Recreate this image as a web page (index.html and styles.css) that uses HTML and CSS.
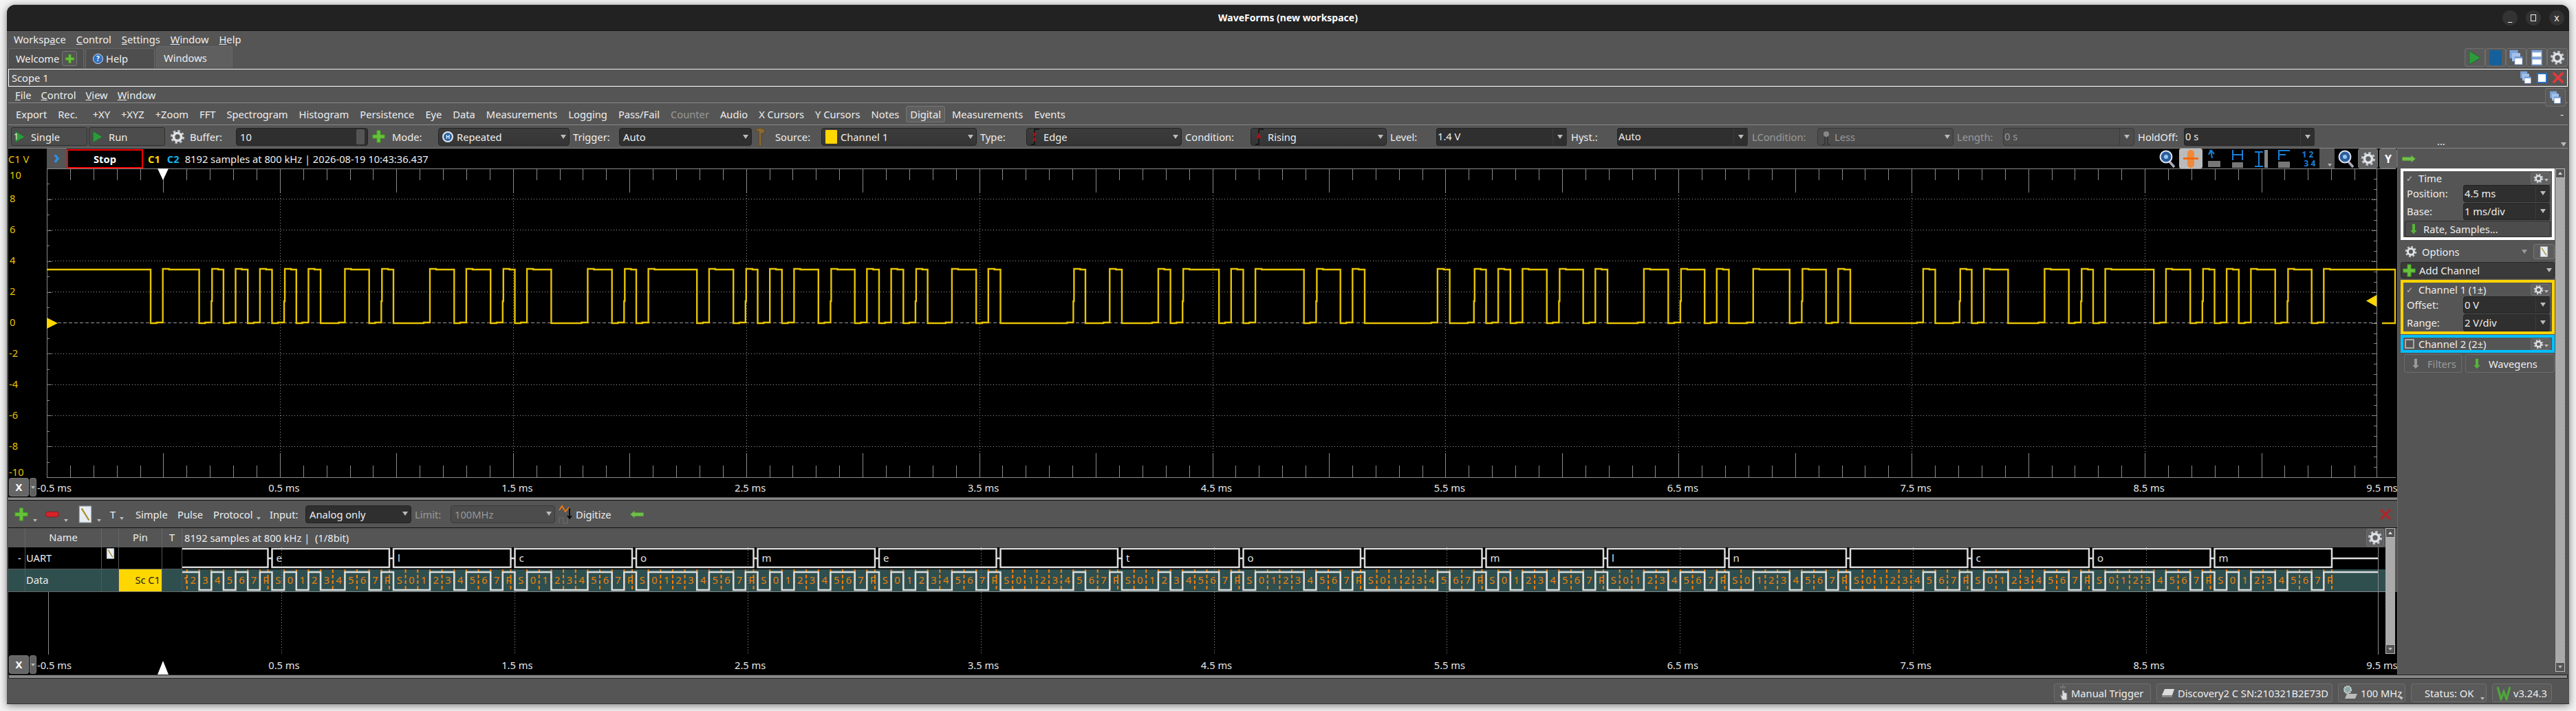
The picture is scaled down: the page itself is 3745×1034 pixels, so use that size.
FILE: index.html
```html
<!DOCTYPE html>
<html lang="en">
<head>
    <meta charset="UTF-8">
    <title>WaveForms (new workspace)</title>
    <link rel="stylesheet" href="styles.css">
</head>
<body>
    <svg class="defs" width="0" height="0">
        <symbol id="i-gear" viewBox="0 0 24 24">
            <circle cx="12" cy="12" r="9" fill="none" stroke="#c4c8cc" stroke-width="4" stroke-dasharray="3.6 3.47"/>
            <circle cx="12" cy="12" r="6" fill="none" stroke="#dfe2e6" stroke-width="4"/>
        </symbol>
        <symbol id="i-plus" viewBox="0 0 24 24">
            <path d="M9 2h6v7h7v6h-7v7H9v-7H2V9h7z" fill="#66c23a" stroke="#3f8d22"/>
        </symbol>
        <symbol id="i-minus" viewBox="0 0 24 24">
            <rect x="2" y="8" width="20" height="8" rx="3" fill="#d8232a" stroke="#8c1a1e"/>
        </symbol>
        <symbol id="i-play" viewBox="0 0 24 24">
            <path d="M3 1l18 11L3 23z" fill="#2d9a3c" stroke="#1c6a28"/>
        </symbol>
        <symbol id="i-down" viewBox="0 0 24 24">
            <path d="M9 1h6v14h4l-7 8-7-8h4z" fill="currentColor"/>
        </symbol>
        <symbol id="i-left" viewBox="0 0 24 16">
            <path d="M1 8l7-6v3h15v6H8v3z" fill="#6fbf4a" stroke="#4c8f30" stroke-width=".6"/>
        </symbol>
        <symbol id="i-right" viewBox="0 0 24 16">
            <path d="M23 8l-7-6v3H1v6h15v3z" fill="#6fbf4a" stroke="#4c8f30" stroke-width=".6"/>
        </symbol>
        <symbol id="i-mag" viewBox="0 0 24 28">
            <path d="M15 18l7 8" stroke="#aab" stroke-width="3.5"/>
            <circle cx="10" cy="11" r="8.5" fill="#2a5e9e" stroke="#dfe6f0" stroke-width="2"/>
            <circle cx="10" cy="11" r="3" fill="#9cc4ee"/>
        </symbol>
        <symbol id="i-note" viewBox="0 0 18 24">
            <rect x="1" y="1" width="16" height="22" fill="#e8edf5" stroke="#9aa"/>
            <path d="M4 4l10 16" stroke="#a88f2c" stroke-width="2"/>
        </symbol>
        <symbol id="i-win" viewBox="0 0 24 28">
            <rect x="1" y="1" width="14" height="14" fill="#7ea4d8"/>
            <rect x="5" y="6" width="14" height="14" fill="#a4c2ea"/>
            <rect x="9" y="12" width="14" height="14" fill="#6f97d0"/>
            <rect x="10" y="15" width="12" height="10" fill="#fff"/>
        </symbol>
        <symbol id="i-split" viewBox="0 0 20 28">
            <rect x="1" y="1" width="18" height="26" fill="#7ea4d8"/>
            <rect x="2.500" y="5" width="15" height="7" fill="#fff"/>
            <rect x="2.500" y="17" width="15" height="8" fill="#fff"/>
        </symbol>
        <symbol id="i-close" viewBox="0 0 20 20">
            <path d="M2 2l16 16M18 2L2 18" stroke="currentColor" stroke-width="4" fill="none"/>
        </symbol>
    </svg>

    <div class="window">
        <div class="titlebar">
            <span class="title">WaveForms (new workspace)</span>
            <div class="wm-buttons">
                <span class="wm">_</span>
                <span class="wm"><i class="wm-box"></i></span>
                <span class="wm">x</span>
            </div>
        </div>

        <div class="menubar main-menu">
            <span>Worksp<u>a</u>ce</span>
            <span><u>C</u>ontrol</span>
            <span><u>S</u>ettings</span>
            <span><u>W</u>indow</span>
            <span><u>H</u>elp</span>
        </div>

        <div class="tabs">
            <div class="tab tab-welcome">Welcome <span class="tab-add"><svg class="ic14"><use href="#i-plus"/></svg></span></div>
            <div class="tab tab-help"><span class="help-dot">?</span> Help</div>
            <div class="tab tab-windows">Windows</div>
            <div class="win-buttons">
                <span class="win-btn"><svg class="ic-tab"><use href="#i-play"/></svg></span>
                <span class="win-btn"><i class="blue-page"></i></span>
                <span class="win-btn"><svg class="ic-tab"><use href="#i-win"/></svg></span>
                <span class="win-btn"><svg class="ic-tab"><use href="#i-split"/></svg></span>
                <span class="win-btn"><svg class="ic-tab"><use href="#i-gear"/></svg></span>
            </div>
        </div>

        <div class="scope-title">
            <span>Scope 1</span>
            <div class="scope-icons">
                <svg class="ic18"><use href="#i-win"/></svg>
                <span class="restore"></span>
                <svg class="ic-close bright"><use href="#i-close"/></svg>
            </div>
        </div>

        <div class="menubar scope-menu">
            <span><u>F</u>ile</span>
            <span><u>C</u>ontrol</span>
            <span><u>V</u>iew</span>
            <span><u>W</u>indow</span>
            <span class="win-btn menu-win"><svg class="ic18"><use href="#i-win"/></svg></span>
        </div>

        <div class="tools">
            <span>Export</span><span>Rec.</span>
            <span class="tools-sep">+XY</span><span>+XYZ</span><span>+Zoom</span><span>FFT</span>
            <span>Spectrogram</span><span>Histogram</span><span>Persistence</span><span>Eye</span>
            <span>Data</span><span>Measurements</span><span>Logging</span><span>Pass/Fail</span>
            <span class="dim">Counter</span><span>Audio</span><span>X Cursors</span><span>Y Cursors</span>
            <span>Notes</span><span class="checked">Digital</span><span>Measurements</span><span>Events</span>
            <span class="tools-end">-</span>
        </div>

        <div class="trigbar">
            <div class="btn run-btn"><svg class="ic-run"><use href="#i-play"/></svg><b class="one">1</b>Single</div>
            <div class="btn run-btn"><svg class="ic-run"><use href="#i-play"/></svg>Run</div>
            <svg class="ic-cfg"><use href="#i-gear"/></svg>
            <label>Buffer:</label>
            <div class="sel dark spin"><span>10</span><i class="spin-cell"></i></div>
            <svg class="ic-add"><use href="#i-plus"/></svg>
            <label>Mode:</label>
            <div class="sel"><i class="mode-dot">H</i><span>Repeated</span><i class="caret"></i></div>
            <label>Trigger:</label>
            <div class="sel dark"><span>Auto</span><i class="caret"></i></div>
            <svg class="ic-hammer" viewBox="0 0 16 34"><path d="M1 5q6-5 14 0v6H10v21H6V8Q3 6 1 8z" fill="#8a6a34" stroke="#5b4420"/></svg>
            <label>Source:</label>
            <div class="sel"><i class="swatch"></i><span>Channel 1</span><i class="caret"></i></div>
            <label>Type:</label>
            <div class="sel"><svg class="ic-edge" viewBox="0 0 14 24"><path d="M1 23h5V1h7" fill="none" stroke="#111" stroke-width="1.5"/><path d="M3 6h6l-3 6 3 6H3l3-6z" fill="#a0141c"/></svg><span>Edge</span><i class="caret"></i></div>
            <label>Condition:</label>
            <div class="sel"><svg class="ic-edge" viewBox="0 0 14 24"><path d="M1 23h5V1h7" fill="none" stroke="#111" stroke-width="1.5"/><path d="M6 6l4 8H2z" fill="#a0141c"/></svg><span>Rising</span><i class="caret"></i></div>
            <label>Level:</label>
            <div class="sel dark cell"><span>1.4 V</span><i class="caret"></i></div>
            <label>Hyst.:</label>
            <div class="sel dark cell"><span>Auto</span><i class="caret"></i></div>
            <label class="dim">LCondition:</label>
            <div class="sel off"><svg class="ic-edge" viewBox="0 0 14 24"><path d="M1 23h4V8h4v15h4" fill="none" stroke="#333" stroke-width="1.5"/><circle cx="7" cy="8" r="4" fill="#888"/></svg><span>Less</span><i class="caret"></i></div>
            <label class="dim">Length:</label>
            <div class="sel off cell"><span>0 s</span><i class="caret"></i></div>
            <label>HoldOff:</label>
            <div class="sel dark cell"><span>0 s</span><i class="caret"></i></div>
            <div class="trig-more"><span>...</span><i class="caret"></i></div>
        </div>

        <div class="workspace">
            <div class="scopes">
                <div class="plot">
                    <div class="plot-top">
                        <span class="unit">C1 V</span>
                        <span class="chevron">›</span>
                        <span class="stop">Stop</span>
                        <b class="c1">C1</b>
                        <b class="c2">C2</b>
                        <span class="info">8192 samples at 800 kHz | 2026-08-19 10:43:36.437</span>
                        <div class="plot-tools">
                            <span class="ptool"><svg class="ic-mag"><use href="#i-mag"/></svg></span>
                            <span class="ptool pick"><svg width="22" height="28" viewBox="0 0 22 28"><rect x="6" y="1" width="10" height="26" rx="5" fill="#f0893c"/><rect x="0" y="12" width="22" height="3" fill="#f36a10"/></svg></span>
                            <span class="ptool"><svg width="20" height="28" viewBox="0 0 20 28"><path d="M5 1l2 12M5 1L2 8M5 1l5 6" stroke="#1a7fd8" stroke-width="2" fill="none"/><rect x="1" y="17" width="18" height="9" fill="#777"/></svg></span>
                            <span class="ptool"><svg width="18" height="28" viewBox="0 0 18 28"><path d="M2 1v15M16 1v15M2 8h14" stroke="#1a7fd8" stroke-width="2" fill="none"/><rect x="1" y="19" width="16" height="8" fill="#777"/></svg></span>
                            <span class="ptool"><svg width="22" height="28" viewBox="0 0 22 28"><path d="M2 4h12M2 25h12M8 4v21" stroke="#1a7fd8" stroke-width="2" fill="none"/><rect x="16" y="1" width="5" height="26" fill="#888"/></svg></span>
                            <span class="ptool"><svg width="20" height="28" viewBox="0 0 20 28"><path d="M2 1v15M2 2h16M2 8h10" stroke="#1a7fd8" stroke-width="2" fill="none"/><rect x="1" y="18" width="17" height="9" fill="#777"/></svg></span>
                            <span class="ptool nums"><span>1 2</span><span>3 4</span></span>
                            <span class="pcaret"><i class="caret small"></i></span>
                            <span class="ptool"><svg class="ic-mag"><use href="#i-mag"/></svg></span>
                            <span class="pbtn gear-btn"><svg class="ic-cfg"><use href="#i-gear"/></svg></span>
                            <span class="pbtn y-btn">Y</span>
                        </div>
                    </div>
                    <svg id="upperPlot" class="canvas" width="3473" height="478" viewBox="12 245 3473 478"></svg>
                    <div class="axis-btns upper-btns"><span class="x-btn">X</span><span class="x-drop"><i class="caret small"></i></span></div>
                </div>

                <div class="splitter"></div>

                <div class="digital">
                    <div class="dig-tools">
                        <span class="with-caret"><svg class="ic-big"><use href="#i-plus"/></svg><i class="caret small"></i></span>
                        <span class="with-caret"><svg class="ic-big"><use href="#i-minus"/></svg><i class="caret small"></i></span>
                        <span class="with-caret"><svg class="ic-big"><use href="#i-note"/></svg><i class="caret small"></i></span>
                        <span class="with-caret">T<i class="caret small"></i></span>
                        <span>Simple</span>
                        <span>Pulse</span>
                        <span class="with-caret">Protocol<i class="caret small"></i></span>
                        <span>Input:</span>
                        <div class="sel dark"><span>Analog only</span><i class="caret"></i></div>
                        <span class="dim">Limit:</span>
                        <div class="sel off"><span>100MHz</span><i class="caret"></i></div>
                        <svg width="20" height="30" viewBox="0 0 20 30"><path d="M1 9l4-6 5 8 5-6" fill="none" stroke="#f07a10" stroke-width="1.8"/><path d="M1 28v-8h6v8h6v-8" fill="none" stroke="#666" stroke-width="1.500"/><path d="M16 6v14m-3-3l3 4 3-4" fill="none" stroke="#000" stroke-width="1.600"/></svg>
                        <span>Digitize</span>
                        <svg class="ic-arrow"><use href="#i-left"/></svg>
                        <svg class="ic-close dark-red"><use href="#i-close"/></svg>
                    </div>
                    <div class="dig-head">
                        <span class="hcell"></span>
                        <span class="hcell center">Name</span>
                        <span class="hcell"></span>
                        <span class="hcell center">Pin</span>
                        <span class="hcell center">T</span>
                        <span class="hinfo">8192 samples at 800 kHz |  (1/8bit)</span>
                        <span class="pbtn head-gear"><svg class="ic-cfg"><use href="#i-gear"/></svg></span>
                    </div>
                    <div class="dig-rows">
                        <div class="dig-names">
                            <div class="row uart">
                                <span class="cell minus">-</span>
                                <span class="cell name">UART</span>
                                <span class="cell"><svg class="ic-note"><use href="#i-note"/></svg></span>
                                <span class="cell"></span>
                                <span class="cell"></span>
                            </div>
                            <div class="row data">
                                <span class="cell"></span>
                                <span class="cell name">Data</span>
                                <span class="cell"></span>
                                <span class="cell pin">Sc C1</span>
                                <span class="cell"></span>
                            </div>
                        </div>
                        <svg id="decoder" class="canvas" width="3203" height="65" viewBox="265 796 3203 65"></svg>
                    </div>
                    <svg id="lowerPlot" class="canvas" width="3473" height="120" viewBox="12 861 3473 120"></svg>
                    <div class="axis-btns lower-btns"><span class="x-btn">X</span><span class="x-drop"><i class="caret small"></i></span></div>
                    <div class="vscroll"><i class="sb-btn"><i class="caret up small"></i></i><i class="sb-track"></i><i class="sb-btn"><i class="caret small"></i></i></div>
                </div>
            </div>

            <div class="side">
                <div class="side-col">
                    <div class="side-top"><svg class="ic-arrow"><use href="#i-right"/></svg></div>

                    <div class="sidebox white">
                        <div class="box-title"><span class="tick">✓</span>Time<span class="mini-gear"><svg class="ic14"><use href="#i-gear"/></svg><i class="caret small"></i></span></div>
                        <div class="field"><label>Position:</label><div class="sel dark cell"><span>4.5 ms</span><i class="caret"></i></div></div>
                        <div class="field"><label>Base:</label><div class="sel dark cell"><span>1 ms/div</span><i class="caret"></i></div></div>
                        <div class="btn wide"><svg class="ic-dn green"><use href="#i-down"/></svg>Rate, Samples...</div>
                    </div>

                    <div class="options">
                        <svg class="ic-opt"><use href="#i-gear"/></svg>
                        <span>Options</span>
                        <i class="caret"></i>
                        <span class="btn note-btn"><svg class="ic-note"><use href="#i-note"/></svg></span>
                    </div>

                    <div class="add-channel"><svg class="ic-add"><use href="#i-plus"/></svg><span>Add Channel</span><i class="caret"></i></div>

                    <div class="sidebox gold">
                        <div class="box-title"><span class="tick">✓</span>Channel 1 (1±)<span class="mini-gear"><svg class="ic14"><use href="#i-gear"/></svg><i class="caret small"></i></span></div>
                        <div class="field"><label>Offset:</label><div class="sel dark cell"><span>0 V</span><i class="caret"></i></div></div>
                        <div class="field"><label>Range:</label><div class="sel dark cell"><span>2 V/div</span><i class="caret"></i></div></div>
                    </div>

                    <div class="sidebox blue">
                        <div class="box-title"><i class="check"></i>Channel 2 (2±)<span class="mini-gear"><svg class="ic14"><use href="#i-gear"/></svg><i class="caret small"></i></span></div>
                    </div>

                    <div class="side-btns">
                        <div class="btn filters"><svg class="ic-dn gray"><use href="#i-down"/></svg>Filters</div>
                        <div class="btn wavegens"><svg class="ic-dn green"><use href="#i-down"/></svg>Wavegens</div>
                    </div>
                </div>
                <div class="vscroll side-scroll"><i class="sb-btn"><i class="caret up small"></i></i><i class="sb-track"></i><i class="sb-btn"><i class="caret small"></i></i></div>
            </div>
        </div>

        <div class="strip"></div>

        <div class="statusbar">
            <div class="btn st-manual"><svg width="14" height="26" viewBox="0 0 14 26"><path d="M5 9v8l-3-2 3 8h7V13l-4-1V9z" fill="#ddd" stroke="#777"/><path d="M6 1v5M2 3l2 3M10 3L8 6" stroke="#999"/></svg>Manual Trigger</div>
            <div class="btn st-device"><svg width="20" height="14" viewBox="0 0 20 14"><path d="M5 1h14l-3 9H1z" fill="#ddd"/><path d="M1 10h15v3H1z" fill="#888"/></svg>Discovery2 C SN:210321B2E73D</div>
            <div class="btn st-clock"><svg width="22" height="24" viewBox="0 0 22 24"><path d="M6 13h15l-3 7H3z" fill="#bbb"/><circle cx="7" cy="7" r="5" fill="#8aa" stroke="#ddd" stroke-width="2" stroke-dasharray="2 1"/></svg>100 MHz<i class="caret small"></i></div>
            <div class="btn st-status">Status: OK<i class="caret small"></i></div>
            <div class="btn st-version"><svg width="20" height="22" viewBox="0 0 20 22"><path d="M1 2l5 18 4-11 4 11 5-18" fill="none" stroke="#4fa83a" stroke-width="3"/></svg>v3.24.3</div>
        </div>
    </div>

    <script src="script.js"></script>
</body>
</html>
```

FILE: styles.css
```css
* {
    box-sizing: border-box;
}

body {
    margin: 0;
    width: 3745px;
    height: 1034px;
    padding: 7px 10px 0;
    overflow: hidden;
    background-color: #f3f3f3;
    font-family: "Noto Sans", sans-serif;
    font-size: 14.7px;
    color: #eee;
}

.defs {
    position: absolute;
}

svg {
    display: block;
    flex: none;
}

i {
    font-style: normal;
}

.window {
    display: flex;
    flex-direction: column;
    height: 1017px;
    background-color: #555;
    border-radius: 12px 12px 0 0;
    box-shadow: 0 2px 12px rgba(0, 0, 0, 0.5);
    overflow: hidden;
}

.titlebar {
    position: relative;
    flex: none;
    height: 38px;
    display: flex;
    align-items: center;
    justify-content: center;
    background-color: #222;
    border-bottom: 1px solid #111;
}

.title {
    font-weight: 700;
    font-size: 14px;
    color: #fff;
}

.wm-buttons {
    position: absolute;
    right: 7px;
    top: 8px;
    display: flex;
    gap: 12px;
}

.wm {
    width: 22px;
    height: 22px;
    border-radius: 50%;
    background-color: #333;
    display: flex;
    align-items: center;
    justify-content: center;
    font-size: 14px;
    line-height: 1;
    color: #eee;
}

.wm-box {
    width: 8px;
    height: 10px;
    border: 1px solid #eee;
}

.menubar {
    flex: none;
    display: flex;
    align-items: center;
}

.main-menu {
    height: 23px;
    padding-left: 10px;
    gap: 15px;
}

.scope-menu {
    position: relative;
    height: 23px;
    margin: 0 2px;
    padding-left: 10px;
    gap: 14px;
}

.menu-win {
    position: absolute;
    right: 3px;
    top: 2px;
    height: 21px;
    width: 20px;
}

.tabs {
    flex: none;
    height: 32px;
    margin: 0 2px;
    display: flex;
    align-items: flex-end;
    border-bottom: 1px solid #444;
    gap: 2px;
}

.tab {
    height: 29px;
    display: flex;
    align-items: center;
    gap: 4px;
    background-color: #4e4e4e;
    border: 1px solid #666;
    border-bottom: none;
    border-radius: 3px 3px 0 0;
    padding-left: 10px;
}

.tab-welcome {
    width: 110px;
}

.tab-add {
    width: 22px;
    height: 22px;
    background-color: #555;
    border: 1px solid #777;
    border-radius: 3px;
    display: flex;
    align-items: center;
    justify-content: center;
}

.tab-help {
    width: 101px;
}

.help-dot {
    width: 15px;
    height: 15px;
    border-radius: 50%;
    background-color: #2d70c0;
    border: 1px solid #dde;
    font-size: 10px;
    font-weight: 700;
    line-height: 13px;
    text-align: center;
    color: #fff;
}

.tab-windows {
    width: 111px;
    height: 32px;
    background-color: #5f5f5f;
}

.ic14 {
    width: 15px;
    height: 15px;
}

.ic18 {
    width: 18px;
    height: 20px;
}

.win-buttons {
    margin-left: auto;
    margin-bottom: 2px;
    display: flex;
}

.win-btn {
    width: 30px;
    height: 27px;
    background-color: #5a5a5a;
    border: 1px solid #707070;
    border-radius: 3px;
    display: flex;
    align-items: center;
    justify-content: center;
}

.ic-tab {
    width: 22px;
    height: 24px;
}

.blue-page {
    width: 18px;
    height: 22px;
    background-color: #14609c;
    border-radius: 2px;
}

.scope-title {
    flex: none;
    height: 26px;
    margin: 0 2px;
    padding: 0 4px;
    border: 1px solid #fff;
    display: flex;
    align-items: center;
    justify-content: space-between;
}

.scope-icons {
    display: flex;
    align-items: center;
    gap: 7px;
}

.restore {
    width: 15px;
    height: 15px;
    background-color: #fff;
    border: 2px solid #2d70c0;
}

.ic-close {
    width: 18px;
    height: 20px;
}

.bright {
    color: #e0393c;
}

.dark-red {
    color: #a82a2e;
}

.tools {
    flex: none;
    height: 32px;
    margin: 0 2px;
    padding-left: 11px;
    display: flex;
    align-items: center;
    gap: 16px;
    border-top: 1px solid #888;
}

.tools-sep {
    margin-left: 6px;
}

.tools-end {
    margin-left: auto;
    margin-right: 6px;
}

.dim {
    color: #9a9a9a;
}

.checked {
    margin: 0 -6px;
    padding: 1px 5px;
    background-color: #5f5f5f;
    border: 1px solid #777;
    border-radius: 3px;
}

.trigbar {
    flex: none;
    height: 35px;
    margin: 0 2px;
    padding-left: 4px;
    display: grid;
    grid-template-columns: 113px 118px 29px 67px 197px 30px 67px 196px 67px 198px 29px 67px 231px 67px 231px 95px 203px 67px 196px 67px 196px 95px 203px 67px 196px 67px 196px 1fr;
    align-items: center;
    border-top: 1px solid #888;
    border-bottom: 1px solid #888;
}

.btn {
    display: flex;
    align-items: center;
    background-color: #4c4c4c;
    border: 1px solid #2f2f2f;
    border-radius: 3px;
}

.run-btn {
    width: 111px;
    height: 27px;
    padding-left: 3px;
    gap: 7px;
    position: relative;
}

.ic-run {
    width: 18px;
    height: 24px;
}

.one {
    position: absolute;
    left: 3px;
    font-weight: 400;
    font-size: 12px;
}

.ic-cfg {
    width: 22px;
    height: 24px;
}

.ic-add {
    width: 21px;
    height: 21px;
}

.ic-hammer {
    width: 14px;
    height: 30px;
}

.sel {
    position: relative;
    height: 26px;
    margin-right: 5px;
    display: flex;
    align-items: center;
    gap: 5px;
    padding: 0 4px 0 5px;
    background: linear-gradient(#3c3c3c, #353535);
    border: 1px solid #232323;
    border-radius: 4px;
}

.sel > span {
    flex: 1;
}

.sel.dark {
    background: #2f2f2f;
}

.sel.off {
    background: #4c4c4c;
    border-color: #3a3a3a;
    color: #999;
}

.sel.cell {
    padding-right: 0;
}

.sel.cell::after {
    content: "";
    position: absolute;
    right: 20px;
    top: 0;
    bottom: 0;
    width: 1px;
    background-color: #3c3c3c;
}

.sel.cell .caret {
    margin: 0 6px 0 0;
}

.caret {
    flex: none;
    width: 0;
    height: 0;
    margin-left: 4px;
    border-left: 4px solid transparent;
    border-right: 4px solid transparent;
    border-top: 6px solid #bbb;
}

.caret.small {
    display: inline-block;
    border-left-width: 3px;
    border-right-width: 3px;
    border-top-width: 4px;
}

.caret.up {
    border-top: none;
    border-bottom: 4px solid #ddd;
}

.spin-cell {
    width: 12px;
    height: 22px;
    background-color: #555;
    border-radius: 2px;
}

.mode-dot {
    width: 16px;
    height: 16px;
    border-radius: 50%;
    background-color: #2a5e9e;
    border: 2px solid #e5e8ee;
    font-size: 8px;
    font-weight: 700;
    line-height: 12px;
    text-align: center;
}

.swatch {
    width: 17px;
    height: 20px;
    background-color: #ffd700;
    border-radius: 1px;
}

.ic-edge {
    width: 14px;
    height: 24px;
}

.trig-more {
    display: flex;
    justify-content: space-between;
    align-items: flex-end;
    height: 28px;
    padding: 0 2px 0 172px;
    line-height: 1;
}

.workspace {
    flex: none;
    height: 765px;
    margin: 0 2px;
    display: flex;
}

.scopes {
    width: 3473px;
    display: flex;
    flex-direction: column;
}

.plot {
    position: relative;
    height: 507px;
    background-color: #000;
}

.plot-top {
    height: 29px;
    display: flex;
    align-items: center;
    background-color: #000;
}

.unit {
    width: 56px;
    color: #e6c300;
}

.chevron {
    width: 29px;
    height: 29px;
    background-color: #555;
    color: #2b8fe8;
    font-size: 26px;
    font-weight: 700;
    line-height: 24px;
    text-align: center;
}

.stop {
    width: 111px;
    height: 28px;
    border: 2px solid #f00;
    font-weight: 700;
    line-height: 24px;
    text-align: center;
    color: #fff;
}

.c1 {
    margin-left: 7px;
    color: #ffd700;
}

.c2 {
    margin-left: 10px;
    color: #14b4f0;
}

.info {
    margin-left: 8px;
}

.plot-tools {
    margin-left: auto;
    display: flex;
    align-items: center;
    height: 29px;
}

.ptool {
    width: 34px;
    height: 29px;
    display: flex;
    align-items: center;
    justify-content: center;
}

.pick {
    background-color: #bbb;
    border-radius: 3px;
}

.ic-mag {
    width: 24px;
    height: 28px;
}

.nums {
    flex-direction: column;
    color: #1a7fd8;
    font-size: 12px;
    font-weight: 700;
    line-height: 13px;
}

.nums span:last-child {
    margin-left: 6px;
}

.pcaret {
    width: 22px;
    height: 29px;
    background-color: #555;
    display: flex;
    align-items: flex-end;
    justify-content: flex-end;
    padding: 0 4px 3px 0;
}

.pbtn {
    height: 29px;
    background-color: #606060;
    border: 1px solid #707070;
    border-radius: 3px;
    display: flex;
    align-items: center;
    justify-content: center;
}

.gear-btn {
    width: 29px;
    margin-right: 2px;
}

.y-btn {
    width: 26px;
    font-weight: 700;
    font-size: 16px;
    color: #fff;
}

.canvas {
    background-color: #000;
}

.axis-btns {
    position: absolute;
    left: 1px;
    display: flex;
    gap: 1px;
    height: 27px;
}

.upper-btns {
    bottom: 1px;
}

.lower-btns {
    bottom: 1px;
}

.x-btn {
    width: 29px;
    background-color: #666;
    border: 1px solid #777;
    border-radius: 3px;
    font-weight: 700;
    line-height: 25px;
    text-align: center;
    color: #fff;
}

.x-drop {
    width: 10px;
    background-color: #606060;
    border: 1px solid #777;
    border-radius: 3px;
    display: flex;
    align-items: center;
    justify-content: center;
}

.x-drop .caret {
    margin: 0;
}

.splitter {
    height: 5px;
    background-color: #888;
    border-top: 1px solid #555;
    border-bottom: 1px solid #111;
}

.digital {
    position: relative;
    height: 253px;
}

.dig-tools {
    height: 39px;
    display: grid;
    grid-template-columns: 45px 48px 47px 37px 61px 52px 82px 52px 159px 52px 157px 25px 78px 1fr 26px;
    align-items: center;
    padding-left: 8px;
}

.with-caret {
    display: flex;
    align-items: flex-end;
    gap: 6px;
}

.dig-tools .caret {
    margin: 0 0 2px;
}

.ic-big {
    width: 22px;
    height: 26px;
}

.ic-arrow {
    width: 22px;
    height: 14px;
}

.dig-head {
    position: relative;
    height: 29px;
    display: flex;
    align-items: center;
    border-top: 1px solid #111;
}

.hcell {
    height: 28px;
    line-height: 27px;
    border-right: 1px solid #666;
}

.center {
    text-align: center;
}

.hcell:nth-child(1) {
    width: 25px;
}

.hcell:nth-child(2) {
    width: 111px;
}

.hcell:nth-child(3) {
    width: 25px;
}

.hcell:nth-child(4) {
    width: 63px;
}

.hcell:nth-child(5) {
    width: 29px;
}

.hinfo {
    margin-left: 3px;
    white-space: pre;
}

.head-gear {
    position: absolute;
    right: 19px;
    top: 1px;
    width: 26px;
    height: 26px;
}

.dig-rows {
    display: flex;
    height: 65px;
}

.dig-names {
    width: 253px;
    flex: none;
}

.row {
    display: grid;
    grid-template-columns: 25px 111px 25px 63px 29px;
}

.uart {
    height: 32px;
    background-color: #000;
    border-bottom: 1px solid #555;
}

.data {
    height: 33px;
    background-color: #2f4f4f;
    border-bottom: 1px solid #666;
}

.cell {
    border-right: 1px solid #555;
    line-height: 31px;
    padding-left: 1px;
}

.minus {
    padding-left: 14px;
}

.pin {
    padding: 0 2px 0 0;
    background-color: #ffd700;
    color: #222;
    text-align: right;
}

.ic-note {
    width: 13px;
    height: 16px;
    margin: 1px 0 0 5px;
}

.vscroll {
    display: flex;
    flex-direction: column;
    width: 14px;
    position: absolute;
    right: 3px;
    top: 40px;
    bottom: 30px;
}

.sb-btn {
    flex: none;
    height: 14px;
    background-color: #555;
    border: 1px solid #bbb;
    display: flex;
    align-items: center;
    justify-content: center;
}

.sb-btn .caret {
    margin: 0;
}

.sb-track {
    flex: 1;
    background: repeating-conic-gradient(#eee 0 25%, #666 0 50%) 0 0 / 2px 2px;
}

.side {
    position: relative;
    width: 248px;
    padding-left: 4px;
    border-left: 1px solid #6a6a6a;
    display: flex;
}

.side-col {
    width: 224px;
    display: flex;
    flex-direction: column;
}

.side-scroll {
    top: 29px;
    right: 4px;
    bottom: 4px;
}

.side-top {
    height: 29px;
    display: flex;
    align-items: center;
    padding-left: 1px;
}

.sidebox {
    display: flex;
    flex-direction: column;
    border: 4px solid;
    padding: 1px 2px 0;
}

.white {
    height: 104px;
    border-color: #fff;
}

.gold {
    height: 79px;
    margin-top: 2px;
    border-color: #ffd400;
}

.blue {
    height: 26px;
    margin-top: 1px;
    padding-top: 0;
    border-color: #00bfff;
}

.box-title {
    flex: none;
    display: flex;
    align-items: center;
    height: 18px;
}

.tick {
    width: 20px;
    padding-left: 2px;
    font-size: 12px;
    color: #bbb;
}

.check {
    width: 14px;
    height: 14px;
    margin-right: 6px;
    border: 2px solid #aaa;
}

.mini-gear {
    margin-left: auto;
    width: 29px;
    height: 17px;
    background-color: #606060;
    border: 1px solid #707070;
    border-radius: 3px;
    display: flex;
    align-items: center;
    justify-content: flex-end;
    padding-right: 2px;
}

.mini-gear .caret {
    margin: 6px 0 0 1px;
}

.field {
    flex: none;
    height: 26px;
    display: flex;
    align-items: center;
    padding-left: 3px;
}

.field label {
    width: 82px;
}

.field .sel {
    flex: 1;
    margin: 0;
    height: 25px;
}

.wide {
    height: 24px;
    margin-top: 1px;
    padding-left: 4px;
    gap: 6px;
}

.ic-dn {
    width: 16px;
    height: 18px;
}

.green {
    color: #57b33a;
}

.gray {
    color: #999;
}

.options {
    height: 24px;
    margin-top: 5px;
    display: flex;
    align-items: center;
    padding-left: 6px;
    gap: 7px;
}

.ic-opt {
    width: 18px;
    height: 18px;
}

.options .caret {
    margin-left: auto;
    border-top-color: #999;
}

.note-btn {
    width: 31px;
    height: 22px;
    margin-left: 2px;
    justify-content: center;
    background-color: #5c5c5c;
    border-color: #777;
}

.note-btn .ic-note {
    margin: 0;
}

.add-channel {
    height: 24px;
    margin-top: 3px;
    display: flex;
    align-items: center;
    gap: 4px;
    background: #3a3a3a;
    border: 1px solid #2a2a2a;
    border-radius: 3px;
    padding: 0 3px 0 1px;
}

.add-channel span {
    flex: 1;
}

.side-btns {
    display: flex;
    gap: 5px;
    margin-top: 2px;
    padding-left: 5px;
}

.side-btns .btn {
    height: 27px;
    padding-left: 8px;
    gap: 9px;
    background-color: #555;
    border-color: #6c6c6c;
}

.filters {
    width: 84px;
    color: #9a9a9a;
}

.wavegens {
    flex: 1;
}

.strip {
    flex: none;
    height: 6px;
    margin: 0 2px;
    background-color: #888;
    border: 1px solid #222;
}

.statusbar {
    flex: 1;
    display: flex;
    justify-content: flex-end;
    align-items: flex-start;
    gap: 8px;
    padding: 7px 25px 0 0;
    border-bottom: 1px solid #333;
}

.statusbar .btn {
    position: relative;
    height: 27px;
    gap: 4px;
    padding-left: 6px;
    background-color: #5a5a5a;
    border-color: #6e6e6e;
}

.statusbar .caret {
    position: absolute;
    right: 2px;
    bottom: 2px;
}

.st-manual {
    width: 141px;
}

.st-device {
    width: 256px;
}

.st-clock {
    width: 98px;
}

.statusbar .st-status {
    width: 110px;
    padding-left: 19px;
}

.st-version {
    width: 87px;
}

/* plot drawing */
.tick-line {
    stroke: #8a8a8a;
    stroke-width: 1;
    fill: none;
    shape-rendering: crispEdges;
}

.grid-line {
    stroke: #9a9a9a;
    stroke-width: 1;
    stroke-dasharray: 1 3;
    fill: none;
    shape-rendering: crispEdges;
}

.zero-line {
    stroke: #9a9a9a;
    stroke-width: 1;
    stroke-dasharray: 5 3;
    fill: none;
    shape-rendering: crispEdges;
}

.trace {
    stroke: #e6c300;
    stroke-width: 2.4;
    fill: none;
}

.y-label {
    font-size: 14.7px;
    fill: #e6c300;
}

.x-label {
    font-size: 14.7px;
    fill: #e6e6e6;
    text-anchor: middle;
}

.dec-box {
    stroke: #dcdcdc;
    stroke-width: 2.5;
    fill: none;
}

.dec-text {
    font-size: 15px;
    fill: #e0e0e0;
}

.dec-bit {
    font-size: 14.7px;
    fill: #e8820c;
    text-anchor: middle;
}

.dec-mark {
    stroke: #ff7f00;
    stroke-width: 2;
    stroke-dasharray: 5 3;
    fill: none;
}
```

FILE: script.js
```js
const DIV = 338.9;
const X0 = 68;
const BIT = 17.65;
const START = 219;
const MESSAGE = 'Welcome to mln com';

function framesFromMessage(text) {
    return text.split('').map(function (ch, n) {
        const code = ch.charCodeAt(0);
        const bits = [0];
        for (let i = 0; i < 8; i++) bits.push((code >> i) & 1);
        bits.push(1);
        return { ch: ch, bits: bits, x: START + n * 10 * BIT };
    });
}

const frames = framesFromMessage(MESSAGE);
const allBits = frames.reduce(function (acc, f) { return acc.concat(f.bits); }, []);

// Square wave path, jog is the small overshoot the real trace has
function wavePath(xBegin, xEnd, hi, lo, jog) {
    let d = 'M' + xBegin + ' ' + hi;
    let i = 0;
    let edge = 0;
    while (i < allBits.length) {
        let j = i;
        while (j < allBits.length && allBits[j] === allBits[i]) j++;
        const xs = START + i * BIT;
        const xe = j === allBits.length ? xEnd : START + j * BIT;
        d += ' H' + xs.toFixed(1);
        if (allBits[i] === 1) {
            if (jog && edge % 3 === 0) d += ' V' + (lo - 32) + ' h1';
            d += ' V' + (hi - jog);
            if (jog) d += ' h9 V' + hi;
        } else {
            if (jog && edge % 4 === 1) d += ' V' + (hi + 45) + ' h1';
            d += ' V' + lo;
            if (jog && xe - xs > 12) d += ' H' + (xe - 9).toFixed(1) + ' V' + (lo - jog);
        }
        d += ' H' + xe.toFixed(1);
        edge++;
        i = j;
    }
    return d;
}

function line(cls, d) {
    return '<path class="' + cls + '" d="' + d + '"/>';
}

function axisLabels(y) {
    let s = '';
    for (let k = 0; k <= 10; k++) {
        const x = X0 + k * DIV + (k === 0 ? 11 : 6);
        s += '<text class="x-label" x="' + x.toFixed(1) + '" y="' + y + '">' + (k - 0.5) + ' ms</text>';
    }
    return s;
}

function drawUpper() {
    const top = 245;
    const bottom = 694;
    const right = 3455;
    let ticks = 'M' + X0 + ' ' + top + 'V' + bottom + ' M' + right + ' ' + top + 'V' + bottom;
    ticks += ' M' + X0 + ' ' + top + 'H3483 M' + X0 + ' ' + bottom + 'H3483';
    for (let i = 1; i < 100; i++) {
        const x = Math.round(X0 + i * DIV / 10) + 0.5;
        const len = i % 5 === 0 ? 35 : 17;
        ticks += ' M' + x + ' ' + top + 'v' + len + ' M' + x + ' ' + bottom + 'v-' + len;
    }
    for (let i = 0; i <= 20; i++) {
        const y = Math.round(top + i * 22.45) + 0.5;
        const w = i % 2 === 0 ? 7 : 4;
        ticks += ' M' + X0 + ' ' + y + 'h' + w;
    }
    for (let i = 0; i <= 30; i++) {
        const y = Math.round(top + i * 14.97) + 0.5;
        const w = i % 3 === 0 ? 7 : 4;
        ticks += ' M' + right + ' ' + y + 'h-' + w;
    }

    let grid = '';
    for (let k = 1; k < 10; k++) {
        const x = Math.round(X0 + k * DIV) + 0.5;
        grid += ' M' + x + ' ' + (top + 35) + 'V' + (bottom - 35);
    }
    for (let v = -8; v <= 8; v += 2) {
        if (v === 0) continue;
        const y = Math.round(469 - v * 22.45) + 0.5;
        grid += ' M' + X0 + ' ' + y + 'H' + right;
    }

    let s = line('grid-line', grid) + line('tick-line', ticks);
    s += line('tick-line', 'M237.5 ' + top + 'v35');
    s += line('zero-line', 'M84 469.5H' + right);

    for (let v = 10; v >= -10; v -= 2) {
        let y = 469 - v * 22.45 + 5;
        if (v === 10) y = 260;
        if (v === -10) y = 692;
        s += '<text class="y-label" x="' + (v < 0 ? 13 : 14) + '" y="' + y.toFixed(0) + '">' + v + '</text>';
    }

    s += line('trace', wavePath(X0, 3482, 392, 470, 1) + ' V470 H3463');
    s += '<path d="M229 245h16l-8 17z" fill="#fff"/>';
    s += '<path d="M68 462l16 8-16 8z" fill="#ffd700"/>';
    s += '<path d="M3455 429v17l-15-8.500z" fill="#ffd700"/>';
    s += axisLabels(715);
    document.getElementById('upperPlot').innerHTML = s;
}

function drawDecoder() {
    const right = 3457;
    let s = '<rect x="265" y="828" width="3203" height="32" fill="#2f4f4f"/>';
    s += line('tick-line', 'M265 860.5H3468');

    let marks = '';
    let labels = '';
    let boxes = '';
    let wires = '';
    frames.forEach(function (f, n) {
        const end = f.x + 9.66 * BIT;
        boxes += 'M' + f.x.toFixed(1) + ' 798h' + (9.66 * BIT).toFixed(1) + 'v27h-' + (9.66 * BIT).toFixed(1) + 'z ';
        const next = n + 1 < frames.length ? frames[n + 1].x : right;
        wires += 'M' + end.toFixed(1) + ' 812H' + next.toFixed(1) + ' ';
        if (f.ch !== 'W') {
            labels += '<text class="dec-text" x="' + (f.x + 6).toFixed(1) + '" y="817">' + f.ch + '</text>';
        }
        for (let i = 1; i <= 9; i++) {
            const x = (f.x + i * BIT).toFixed(1);
            marks += 'M' + x + ' 828V860 ';
        }
        marks += 'M' + end.toFixed(1) + ' 828V860 ';
        'S01234567P'.split('').forEach(function (name, i) {
            let x = f.x + (i + 0.5) * BIT;
            // the column starts at 265, bits left of it are not shown
            if (x < 255) return;
            if (x < 270) x = 270;
            labels += '<text class="dec-bit" x="' + x.toFixed(1) + '" y="849">' + name + '</text>';
        });
    });

    let grid = '';
    for (let k = 1; k < 10; k++) {
        const x = Math.round(X0 + 2 + k * DIV) + 0.5;
        grid += ' M' + x + ' 796V861';
    }
    s += line('grid-line', grid);
    s += line('dec-mark', marks);
    s += line('dec-box', boxes + wires);
    s += line('dec-box', wavePath(265, right, 832, 858, 0));
    s += labels;
    s += line('tick-line', 'M' + (right + 0.5) + ' 796V861');
    document.getElementById('decoder').innerHTML = s;
}

function drawLower() {
    const bottom = 952;
    let ticks = 'M70.5 861V' + bottom + ' M3457.5 861V' + bottom;
    let grid = '';
    for (let k = 1; k < 10; k++) {
        const x = Math.round(X0 + 2 + k * DIV) + 0.5;
        grid += ' M' + x + ' 861V' + (bottom - 2);
    }
    let s = line('grid-line', grid) + line('tick-line', ticks);
    s += axisLabels(973);
    s += '<path d="M229 981l8-20 8 20z" fill="#fff"/>';
    document.getElementById('lowerPlot').innerHTML = s;
}

drawUpper();
drawDecoder();
drawLower();
```
